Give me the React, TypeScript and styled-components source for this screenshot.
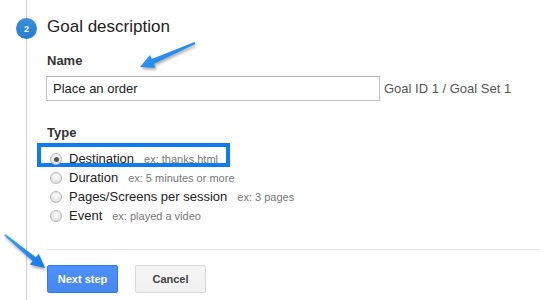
import styled, {createGlobalStyle} from "styled-components";

const GlobalStyle = createGlobalStyle`
  html, body {
    margin: 0;
    padding: 0;
    background: #fff;
  }
  body {
    font-family: "Liberation Sans", Arial, sans-serif;
    overflow: hidden;
  }
`;

const Page = styled.div`
  position: relative;
  display: flex;
  width: 540px;
  height: 300px;
  overflow: hidden;
`;

const Rail = styled.div`
  flex: 0 0 47px;
  background: linear-gradient(#cfcfcf, #cfcfcf) no-repeat 26px 0 / 1px 100%;
`;

const StepBadge = styled.div`
  width: 21px;
  height: 21px;
  margin: 18px 0 0 16px;
  border-radius: 50%;
  background: linear-gradient(#3a8fdc, #2a7ccd);
  color: #fff;
  font-size: 9px;
  font-weight: bold;
  display: flex;
  align-items: center;
  justify-content: center;
`;

const Content = styled.div`
  flex: 1;
  padding-top: 16px;
  display: flex;
  flex-direction: column;
`;

const Title = styled.h2`
  margin: 0;
  font-size: 17px;
  line-height: 22px;
  font-weight: normal;
  color: #222;
`;

const Label = styled.div<{$gap: number}>`
  margin-top: ${(p) => p.$gap}px;
  font-size: 13px;
  line-height: 16px;
  font-weight: bold;
  color: #333;
`;

const InputRow = styled.div`
  margin-top: 7px;
  display: flex;
  align-items: center;
  gap: 4px;
`;

const TextInput = styled.input`
  box-sizing: border-box;
  width: 334px;
  height: 25px;
  margin: 0 0 0 -1px;
  padding: 0 6px;
  border: 1px solid #c2c2c2;
  border-top-color: #b0b0b0;
  border-radius: 0;
  font-family: inherit;
  font-size: 13px;
  color: #222;
  outline: none;
`;

const Meta = styled.span`
  font-size: 13px;
  color: #555;
`;

const Options = styled.div`
  position: relative;
  margin-top: 8px;
  display: flex;
  flex-direction: column;
`;

const Highlight = styled.div`
  position: absolute;
  left: -10px;
  top: -6px;
  width: 193px;
  height: 24px;
  box-sizing: border-box;
  border: 4px solid #0d7bf2;
`;

const OptionRow = styled.label`
  height: 19px;
  display: flex;
  align-items: center;
`;

const Radio = styled.span<{$checked?: boolean}>`
  position: relative;
  box-sizing: border-box;
  width: 12px;
  height: 12px;
  margin: 1px 7px 0 3px;
  border-radius: 50%;
  border: 1px solid #b9b9b9;
  background: radial-gradient(circle at 50% 35%, #fdfdfd, #d8d8d8);

  &::after {
    content: "";
    display: ${(p) => (p.$checked ? "block" : "none")};
    position: absolute;
    left: 2.5px;
    top: 2.5px;
    width: 5px;
    height: 5px;
    border-radius: 50%;
    background: #555;
  }
`;

const OptionName = styled.span`
  font-size: 13px;
  color: #222;
`;

const Hint = styled.span`
  margin-left: 10px;
  font-size: 11px;
  color: #777;
`;

const Divider = styled.div`
  margin-top: 24px;
  height: 1px;
  background: #e3e3e3;
`;

const ButtonRow = styled.div`
  margin-top: 15px;
  display: flex;
  gap: 17px;
`;

const ActionButton = styled.button<{$primary?: boolean}>`
  box-sizing: border-box;
  min-width: 71px;
  height: 28px;
  padding: 0 8px;
  border-radius: 2px;
  font-family: inherit;
  font-size: 11px;
  font-weight: bold;
  border: 1px solid ${(p) => (p.$primary ? "#3079ed" : "#d9d9d9")};
  background: ${(p) =>
    p.$primary
      ? "linear-gradient(#4d90fe, #4787ed)"
      : "linear-gradient(#f5f5f5, #f1f1f1)"};
  color: ${(p) => (p.$primary ? "#fff" : "#444")};
`;

const Annotations = styled.svg`
  position: absolute;
  left: 0;
  top: 0;
  pointer-events: none;
  filter: drop-shadow(1px 2px 1.5px rgba(0, 0, 0, 0.35));
`;

const options = [
  {name: "Destination", hint: "ex: thanks.html", checked: true},
  {name: "Duration", hint: "ex: 5 minutes or more"},
  {name: "Pages/Screens per session", hint: "ex: 3 pages"},
  {name: "Event", hint: "ex: played a video"},
];

export default function App() {
  return (
    <Page>
      <GlobalStyle />
      <Rail>
        <StepBadge>2</StepBadge>
      </Rail>
      <Content>
        <Title>Goal description</Title>
        <Label $gap={15}>Name</Label>
        <InputRow>
          <TextInput defaultValue="Place an order" />
          <Meta>Goal ID 1 / Goal Set 1</Meta>
        </InputRow>
        <Label $gap={24}>Type</Label>
        <Options>
          <Highlight />
          {options.map((o) => (
            <OptionRow key={o.name}>
              <Radio $checked={o.checked} />
              <OptionName>{o.name}</OptionName>
              <Hint>{o.hint}</Hint>
            </OptionRow>
          ))}
        </Options>
        <Divider />
        <ButtonRow>
          <ActionButton $primary>Next step</ActionButton>
          <ActionButton>Cancel</ActionButton>
        </ButtonRow>
      </Content>

      <Annotations width="540" height="300" viewBox="0 0 540 300">
        <defs>
          <linearGradient id="arrowFill" x1="0" y1="0" x2="1" y2="1">
            <stop offset="0" stopColor="#3aa0ff" />
            <stop offset="1" stopColor="#1677e6" />
          </linearGradient>
        </defs>
        {/* arrow pointing at the Name field */}
        <polygon
          fill="url(#arrowFill)"
          points="140,67 150,55 151.8,59.1 194.6,42.1 195.4,43.9 153.8,63.7 155.6,67.8"
        />
        {/* arrow pointing at the Next step button */}
        <polygon
          fill="url(#arrowFill)"
          points="45,268 38.7,253.7 35.8,257.2 5.6,234.2 4.4,235.8 32.6,261 29.7,264.5"
        />
      </Annotations>
    </Page>
  );
}
